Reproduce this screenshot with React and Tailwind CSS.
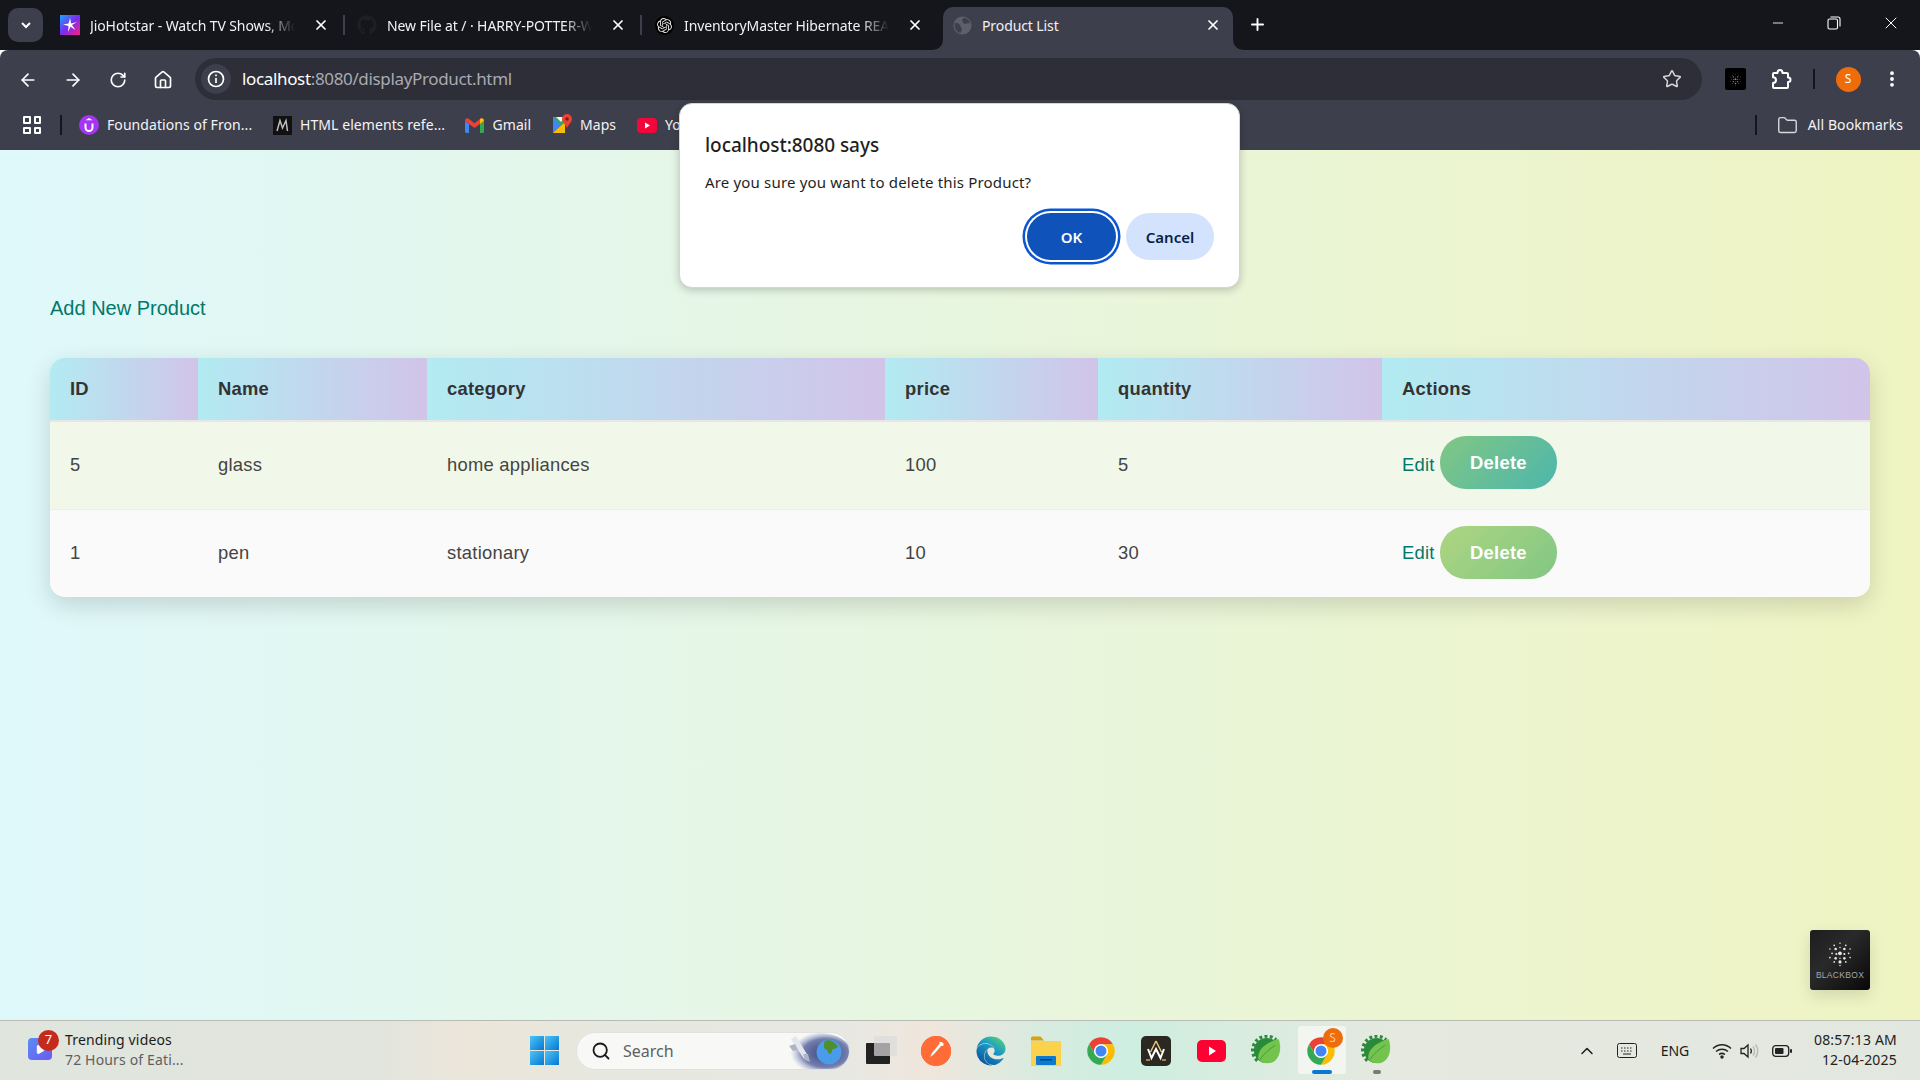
import React from "react";
import { ArrowLeft, ArrowRight, RotateCw, Home, Star, MoreVertical, X, Plus, Minus, Folder, ChevronUp, Search, Play } from "lucide-react";
import { FaGithub, FaEdge } from "react-icons/fa";
import { SiOpenai, SiPostman } from "react-icons/si";

const UI = "font-['Noto_Sans','Open_Sans',sans-serif]";

function ChromeLogo({ size = 30 }) {
  return (
    <svg width={size} height={size} viewBox="0 0 48 48">
      <path d="M4.95 13A22 22 0 0 1 43.05 13H24A11 11 0 0 0 14.47 29.5Z" fill="#ea4335" />
      <path d="M43.05 13A22 22 0 0 1 24 46L33.53 29.5A11 11 0 0 0 24 13Z" fill="#fbbc04" />
      <path d="M24 46A22 22 0 0 1 4.95 13L14.47 29.5A11 11 0 0 0 33.53 29.5Z" fill="#34a853" />
      <circle cx="24" cy="24" r="11" fill="#fff" />
      <circle cx="24" cy="24" r="8.8" fill="#4285f4" />
    </svg>
  );
}

function SpringLogo() {
  return (
    <svg width="31" height="31" viewBox="0 0 32 32">
      <circle cx="16" cy="16" r="13" fill="#2a8a3c" />
      <path d="M6.500 26.500A14.500 14.500 0 0 1 26 5" fill="none" stroke="#2a8a3c" strokeWidth="3.400" strokeDasharray="3 2.400" />
      <path d="M28.500 4C31.500 12 30.500 22 24 27C18 31 10.500 29.500 7.500 24.500C6.500 15 15 8 28.500 4Z" fill="#74c34d" />
      <path d="M9 25.500C14 18.500 19 14.500 25 10.500" fill="none" stroke="#3f9c42" strokeWidth="1" />
    </svg>
  );
}

function PuzzleIcon() {
  return (
    <svg width="24" height="24" viewBox="0 0 24 24" fill="none" stroke="#fff" strokeWidth="2" strokeLinejoin="round">
      <path d="M5 6h3.500c0-1.200 0-3 2.500-3s2.500 1.800 2.500 3H18a1 1 0 0 1 1 1v3.500c1.500 0 2.500 1 2.500 2.200s-1 2.300-2.500 2.300V20a1 1 0 0 1-1 1H5a1 1 0 0 1-1-1v-4c2 0 3-1.500 3-3s-1-2.800-3-2.800V7a1 1 0 0 1 1-1z" />
    </svg>
  );
}

function Dots({ size = 36, c = "#e8e8e8" }) {
  const pts = [[18, 3, 1], [10, 6, 1.2], [26, 6, 1.2], [4, 11, 1.1], [12, 11, 1.8], [18, 9, 1], [24, 11, 1.8], [32, 11, 1.1], [7, 17, 1.2], [13, 18, 1.5], [18, 17, 2.6], [24, 18, 1.5], [30, 17, 1.2], [4, 23, 1.2], [12, 24, 1.8], [18, 24, 1], [24, 24, 1.8], [32, 23, 1.1], [10, 29, 1.2], [18, 29, 2.2], [26, 29, 1.2], [18, 34, 1]];
  return (
    <svg width={size} height={size} viewBox="0 0 36 36">
      {pts.map(([x, y, r], i) => (
        <circle key={i} cx={x} cy={y} r={r} fill={c} />
      ))}
    </svg>
  );
}

function Tab({ icon, label, last }) {
  return (
    <div className="flex h-[50px] w-[297px] shrink-0 items-center pl-[12px]">
      <div className="flex w-[20px] justify-center">{icon}</div>
      <div className="ml-[10px] w-[205px] overflow-hidden whitespace-nowrap text-[14px] tracking-[-0.1px] text-[#f1f1f4] [mask-image:linear-gradient(90deg,#000_86%,transparent)]">{label}</div>
      <X size={16} strokeWidth={2.6} className="ml-[18px] text-white" />
      <div className={last ? "" : "ml-[14px] h-[20px] w-[2px] bg-[#3e3f4c]"} />
    </div>
  );
}

function Bookmark({ icon, label, width, ml }) {
  return (
    <div className={`flex items-center gap-[8px] ${ml}`}>
      <div className="flex w-[20px] justify-center">{icon}</div>
      <div className={`${width} -mt-[2px] overflow-hidden whitespace-nowrap text-[14px] tracking-[0.07px] text-[#f3f3f6]`}>{label}</div>
    </div>
  );
}

function TaskIcon({ children }) {
  return <div className="relative flex h-[60px] w-[55px] shrink-0 items-center justify-center">{children}</div>;
}

const rows = [
  { id: 5, name: "glass", cat: "home appliances", price: 100, qty: 5, hover: true },
  { id: 1, name: "pen", cat: "stationary", price: 10, qty: 30, hover: false },
];
const headers = [
  ["ID", "w-[148px]"],
  ["Name", "w-[229px]"],
  ["category", "w-[458px]"],
  ["price", "w-[213px]"],
  ["quantity", "w-[284px]"],
  ["Actions", "w-[488px]"],
];

export default function App() {
  return (
    <div className={`flex h-screen w-full flex-col overflow-hidden ${UI}`}>
      <svg width="0" height="0" className="absolute">
        <defs>
          <linearGradient id="edgeg" x1="0.9" y1="0" x2="0.2" y2="1">
            <stop offset="0" stopColor="#5bd66f" />
            <stop offset="0.4" stopColor="#1d9fc4" />
            <stop offset="1" stopColor="#0a4f9e" />
          </linearGradient>
          <linearGradient id="wing" x1="0" y1="0" x2="1" y2="1">
            <stop offset="0" stopColor="#4cc6f5" />
            <stop offset="1" stopColor="#0776d3" />
          </linearGradient>
          <linearGradient id="uvg" x1="0" y1="0" x2="1" y2="1">
            <stop offset="0" stopColor="#17a6ff" />
            <stop offset="0.5" stopColor="#7a2cf0" />
            <stop offset="1" stopColor="#ff1f7c" />
          </linearGradient>
          <radialGradient id="skyg" cx="0.6" cy="0.5" r="0.55">
            <stop offset="0" stopColor="#1f2a66" stopOpacity="0.9" />
            <stop offset="0.65" stopColor="#3a4a8e" stopOpacity="0.7" />
            <stop offset="1" stopColor="#8f9ac8" stopOpacity="0" />
          </radialGradient>
        </defs>
      </svg>

      {/* tab strip */}
      <div className="flex h-[50px] shrink-0 bg-[#15161b]">
        <div className="ml-[8px] mt-[8px] flex h-[34px] w-[35px] items-center justify-center rounded-[10px] bg-[#3e3f4c]">
          <svg width="14" height="14" viewBox="0 0 14 14"><path d="M3 5l4 4 4-4" fill="none" stroke="#fff" strokeWidth="2" /></svg>
        </div>
        <div className="ml-[5px] flex">
          <Tab label="JioHotstar - Watch TV Shows, Movies" icon={
            <svg width="20" height="20" viewBox="0 0 20 20"><rect width="20" height="20" fill="url(#uvg)" /><path d="M10 3l1.200 5.500L17 7l-5 3 3.500 5-5-3.200L8 17l.5-6L3 9.500l5.500-1z" fill="#fff" /></svg>
          } />
          <Tab label="New File at / · HARRY-POTTER-WEBSITE" icon={<FaGithub size={20} className="text-[#1e1f24]" />} />
          <Tab label="InventoryMaster Hibernate REACT" icon={
            <div className="flex h-[19px] w-[19px] items-center justify-center rounded-full bg-black"><SiOpenai size={15} className="text-[#e6e6e6]" /></div>
          } last />
        </div>
        <div className="relative ml-[4px] mt-[7px] flex h-[43px] w-[290px] items-center rounded-t-[10px] bg-[#3e3f4c] pb-[7px] pl-[10px]">
          <svg width="10" height="10" viewBox="0 0 10 10" className="absolute bottom-0 left-[-10px]"><path d="M10 0v10H0a10 10 0 0 0 10-10z" fill="#3e3f4c" /></svg>
          <svg width="10" height="10" viewBox="0 0 10 10" className="absolute bottom-0 right-[-10px]"><path d="M0 0v10h10A10 10 0 0 1 0 0z" fill="#3e3f4c" /></svg>
          <svg width="19" height="19" viewBox="0 0 20 20"><circle cx="10" cy="10" r="9.500" fill="#5e5f68" /><path d="M2 7c3 0 4 1 5 2s1 3 2 4-1 4-1 5C4 17 1 13 2 7zM11 2c3 0 6 2 7 5-2 1-3 0-4 1s-3 0-4-2 0-3 1-4z" fill="#3e3f4c" /></svg>
          <div className="ml-[10px] w-[223px] whitespace-nowrap text-[14px] tracking-[-0.1px] text-[#f1f1f4]">Product List</div>
          <X size={16} strokeWidth={2.6} className="text-white" />
        </div>
        <Plus size={19} strokeWidth={2.4} className="ml-[15px] mt-[15px] text-white" />
        <div className="ml-auto flex">
          <div className="flex h-[46px] w-[56px] items-center justify-center"><Minus size={16} strokeWidth={1.3} className="text-white" /></div>
          <div className="flex h-[46px] w-[56px] items-center justify-center">
            <svg width="14" height="14" viewBox="0 0 14 14" fill="none" stroke="#fff" strokeWidth="1.100"><rect x="1" y="3" width="9.500" height="10" rx="1.500" /><path d="M3.500 1h7.500a2 2 0 0 1 2 2v7.500" /></svg>
          </div>
          <div className="flex h-[46px] w-[58px] items-center justify-center"><X size={20} strokeWidth={1.2} className="text-white" /></div>
        </div>
      </div>

      {/* toolbar */}
      <div className="flex h-[50px] shrink-0 items-end rounded-t-[8px] bg-[#3e3f4c] pl-[5px]">
        <div className="flex h-[50px] items-center pt-[10px] text-white">
          <div className="flex w-[45px] justify-center"><ArrowLeft size={20} strokeWidth={2} /></div>
          <div className="flex w-[45px] justify-center"><ArrowRight size={20} strokeWidth={2} /></div>
          <div className="flex w-[45px] justify-center"><RotateCw size={18} strokeWidth={2.2} /></div>
          <div className="flex w-[45px] justify-center"><Home size={20} strokeWidth={2} /></div>
        </div>
        <div className="ml-[10px] flex h-[42px] w-[1507px] items-center rounded-full bg-[#2e2e38] pl-[6px] pr-[20px]">
          <div className="flex h-[30px] w-[30px] items-center justify-center rounded-full bg-[#3e3f4c]">
            <svg width="18" height="18" viewBox="0 0 18 18" fill="none" stroke="#fff" strokeWidth="1.700"><circle cx="9" cy="9" r="7.500" /><path d="M9 8v5" /><path d="M9 4.500v1.800" /></svg>
          </div>
          <div className="ml-[11px] whitespace-nowrap text-[17px] tracking-[-0.35px] text-white">localhost<span className="text-[#a9aab2]">:8080/displayProduct.html</span></div>
          <Star size={20} strokeWidth={1.800} className="ml-auto text-[#d5d5da]" />
        </div>
        <div className="flex h-[50px] items-center pt-[8px] text-white">
          <div className="ml-[10px] flex w-[46px] justify-center">
            <div className="flex h-[22px] w-[21px] items-center justify-center rounded-[2px] bg-black"><Dots size={13} c="#8c8c8c" /></div>
          </div>
          <div className="flex w-[46px] justify-center"><PuzzleIcon /></div>
          <div className="flex w-[20px] justify-center"><div className="h-[20px] w-[2px] bg-[#15161b]" /></div>
          <div className="flex w-[48px] justify-center">
            <div className="flex h-[25px] w-[25px] items-center justify-center rounded-full bg-[#ee6c0a] text-[12px] text-white">S</div>
          </div>
          <div className="flex w-[40px] justify-center"><MoreVertical size={20} strokeWidth={2.600} /></div>
        </div>
      </div>

      {/* bookmarks */}
      <div className="flex h-[50px] shrink-0 items-center bg-[#3e3f4c]">
        <div className="ml-[23px] grid h-[18px] w-[18px] grid-cols-2 gap-[3px]">
          <div className="rounded-[1px] border-2 border-white" /><div className="rounded-[1px] border-2 border-white" />
          <div className="rounded-[1px] border-2 border-white" /><div className="rounded-[1px] border-2 border-white" />
        </div>
        <div className="ml-[19px] h-[20px] w-[2px] bg-[#15161b]" />
        <Bookmark ml="ml-[17px]" width="w-[146px]" label="Foundations of Fron..." icon={
          <svg width="20" height="20" viewBox="0 0 20 20"><circle cx="10" cy="10" r="10" fill="#a435f0" /><path d="M6.500 8.500v4a3.500 3.500 0 0 0 7 0v-4" fill="none" stroke="#fff" strokeWidth="2" /><path d="M10 3l3.500 2.200H6.500z" fill="#fff" /></svg>
        } />
        <Bookmark ml="ml-[19px]" width="w-[145px]" label="HTML elements refe..." icon={
          <svg width="19" height="19" viewBox="0 0 19 19"><rect width="19" height="19" fill="#111" /><path d="M4 15L7 4.500 9.500 12 13 4.500 14.500 15" fill="none" stroke="#bdbdbd" strokeWidth="1.500" /></svg>
        } />
        <Bookmark ml="ml-[19.5px]" width="w-[40px]" label="Gmail" icon={
          <svg width="19" height="15" viewBox="0 0 19 15"><path d="M0 3v10.500a1.500 1.500 0 0 0 1.500 1.500H4V6z" fill="#4285f4" /><path d="M15 6v9h2.500a1.500 1.500 0 0 0 1.500-1.500V3z" fill="#34a853" /><path d="M0 3c0-2.500 2.500-3.500 4-2l5.500 4.200L15 1c1.500-1.500 4-.5 4 2l-4 3-5.500 4L4 6z" fill="#ea4335" /><path d="M15 1c1.500-1.500 4-.5 4 2l-4 3z" fill="#fbbc04" /></svg>
        } />
        <Bookmark ml="ml-[19.5px]" width="w-[38px]" label="Maps" icon={
          <svg width="19" height="22" viewBox="0 0 19 22"><path d="M0 3h12v16H0z" fill="#34a853" /><path d="M0 19l12-11v11z" fill="#fbbc04" /><path d="M0 3l8 8-8 8z" fill="#4285f4" /><path d="M12 3L3 3l5 5z" fill="#f1f3f4" /><path d="M14 0a5 5 0 0 1 5 5c0 3-3 5-5 9-2-4-5-6-5-9a5 5 0 0 1 5-5z" fill="#ea4335" /><circle cx="14" cy="5" r="1.800" fill="#7d1f17" /></svg>
        } />
        <Bookmark ml="ml-[19px]" width="w-[40px]" label="YouTube" icon={
          <svg width="20" height="15" viewBox="0 0 20 15"><rect width="20" height="15" rx="4" fill="#f2073b" /><path d="M8 4.500l5 3-5 3z" fill="#fff" /></svg>
        } />
        <div className="ml-auto flex items-center">
          <div className="h-[20px] w-[2px] bg-[#15161b]" />
          <Folder size={21} strokeWidth={1.600} className="ml-[20px] text-[#d8d8dc]" />
          <div className="-mt-[2px] ml-[10px] mr-[17px] whitespace-nowrap text-[14px] tracking-[0.07px] text-[#f3f3f6]">All Bookmarks</div>
        </div>
      </div>

      {/* page */}
      <div className="relative min-h-0 flex-1 bg-[linear-gradient(90deg,#dff8fb,#f0f4c3)] px-[50px] pt-[147px] font-['Liberation_Sans',Arial,sans-serif] leading-[normal]">
        <a className="block text-[20px] text-[#00796b]">Add New Product</a>
        <div className="mt-[38px] overflow-hidden rounded-[15px] shadow-[0_8px_24px_rgba(0,0,0,0.15)]">
          <table className="w-[1820px] table-fixed border-collapse text-left text-[18.4px] tracking-[0.25px]">
            <thead>
              <tr className="border-b-2 border-[#e6e6e6]">
                {headers.map(([h, w]) => (
                  <th key={h} className={`${w} h-[63px] bg-[linear-gradient(90deg,#b2ebf2,#d1c4e9)] px-[20px] font-bold text-[#333]`}>{h}</th>
                ))}
              </tr>
            </thead>
            <tbody>
              {rows.map((r) => (
                <tr key={r.id} className={r.hover ? "border-b border-[#eeeeee] bg-[#f1f8e9] text-[#444]" : "bg-[#fafafa] text-[#444]"}>
                  <td className="px-[20px] pb-[2px]">{r.id}</td>
                  <td className="px-[20px] pb-[2px]">{r.name}</td>
                  <td className="px-[20px] pb-[2px]">{r.cat}</td>
                  <td className="px-[20px] pb-[2px]">{r.price}</td>
                  <td className="px-[20px] pb-[2px]">{r.qty}</td>
                  <td className="px-[20px] pb-[18px] pt-[16px]">
                    <a className="text-[#00796b]">Edit</a>{" "}
                    <button className={r.hover
                      ? "inline-block -translate-y-[2px] rounded-[26px] bg-[linear-gradient(135deg,#81c784,#4db6ac)] px-[30px] py-[15.5px] font-bold text-white"
                      : "inline-block rounded-[26px] bg-[linear-gradient(135deg,#aed581,#81c784)] px-[30px] py-[15.5px] font-bold text-white"}>Delete</button>
                  </td>
                </tr>
              ))}
            </tbody>
          </table>
        </div>

        {/* floating extension */}
        <div className="absolute bottom-[30px] right-[50px] flex h-[60px] w-[60px] flex-col items-center justify-center rounded-[3px] bg-[linear-gradient(135deg,#1d1d1d,#2a2a2a_40%,#080808)] shadow-[0_6px_16px_rgba(0,0,0,0.12)]">
          <Dots size={26} />
          <div className="mt-[3px] text-[8.5px] leading-[10px] tracking-[0.3px] text-[#a8a8a8]">BLACKBOX</div>
        </div>

        {/* confirm dialog */}
        <div className={`absolute left-[679px] top-[-47px] h-[185px] w-[561px] rounded-[13px] border border-[#d5d5d5] bg-white shadow-[0_2px_8px_rgba(0,0,0,0.22)] ${UI} text-[#1f1f1f]`}>
          <div className="ml-[25px] mt-[28px] text-[19px] font-medium leading-[26px] tracking-[-0.05px]">localhost:8080 says</div>
          <div className="ml-[25px] mt-[14px] text-[15px] leading-[20px] tracking-[0.17px]">Are you sure you want to delete this Product?</div>
          <div className="mr-[25px] mt-[21px] flex justify-end gap-[10px]">
            <button className="h-[47px] w-[89px] rounded-full bg-[#0f52ba] text-[15px] font-semibold text-white shadow-[0_0_0_2px_#fff,0_0_0_4.5px_#0b57d0]">OK</button>
            <button className="h-[47px] w-[88px] rounded-full bg-[#d3e3fd] text-[15px] font-semibold text-[#0a1f44]">Cancel</button>
          </div>
        </div>
      </div>

      {/* taskbar */}
      <div className="flex h-[60px] shrink-0 items-center border-t border-[#b9bcb5] bg-[linear-gradient(90deg,#e0e5dd_0px,#e2e5dd_380px,#ece6da_470px,#e6e8e0_620px,#e8e8e2_850px,#f0e6dc_930px,#d8ebe0_1040px,#cdeee0_1130px,#d8ecdf_1230px,#e6e9df_1400px,#e2e7e0_1920px)]">
        <div className="relative flex w-[530px] shrink-0 items-center pl-[28px]">
          <div className="-mt-[3px] flex h-[22px] w-[24px] items-center justify-center rounded-[4px] bg-[linear-gradient(135deg,#5a8cf2,#6a5cf0)]">
            <Play size={11} fill="#fff" className="text-white" />
          </div>
          <div className="absolute left-[38px] top-[-2px] flex h-[21px] w-[21px] items-center justify-center rounded-full bg-[#c42b1c] text-[13px] text-white">7</div>
          <div className="-mt-[2px] ml-[13px] text-[14px] leading-[20px] tracking-[0.15px]">
            <div className="text-[#1b1b1b]">Trending videos</div>
            <div className="text-[#5f5f5f]">72 Hours of Eati...</div>
          </div>
        </div>
        <svg width="29" height="29" viewBox="0 0 29 29" className="shrink-0">
          <rect width="14" height="14" fill="url(#wing)" /><rect x="15" width="14" height="14" fill="url(#wing)" />
          <rect y="15" width="14" height="14" fill="url(#wing)" /><rect x="15" y="15" width="14" height="14" fill="url(#wing)" />
        </svg>
        <div className="relative ml-[17px] flex h-[38px] w-[274px] shrink-0 items-center overflow-hidden rounded-full border border-[#e1e1e1] bg-[#f8f9f6] pl-[14px]">
          <Search size={20} strokeWidth={2.200} className="text-[#1a1a1a]" />
          <div className="ml-[12px] text-[16px] text-[#5f5f5f]">Search</div>
          <svg width="66" height="38" viewBox="0 0 66 38" className="absolute right-0 top-0">
            <ellipse cx="36" cy="20" rx="32" ry="20" fill="url(#skyg)" />
            <circle cx="46" cy="19" r="12.500" fill="#4a9bea" />
            <path d="M42 8c4-2 10 0 13 6-3 1-4 3-6 2 1 4-3 7-4 3-1-3-5-3-4-6 0-2 0-4 1-5z" fill="#4f8f2c" />
            <path d="M8 6l13 20 4-3L13 3z" fill="#e4e6ee" />
            <path d="M6 13l6-2 3 6-5 1zM20 21l5 0 2 8-5-2z" fill="#aeb3c6" />
          </svg>
        </div>
        <div className="ml-[3.5px] flex shrink-0">
          <TaskIcon>
            <div className="absolute left-[12px] top-[22px] h-[21px] w-[24px] rounded-[1px] bg-[#222]" />
            <div className="absolute left-[20px] top-[15px] h-[20px] w-[23px] rounded-[1px] bg-[#dcdcdc]/70" />
          </TaskIcon>
          <TaskIcon>
            <div className="flex h-[30px] w-[30px] items-center justify-center rounded-full bg-[#ff6c37]"><SiPostman size={30} className="text-[#ff6c37]" /></div>
            <svg width="18" height="20" viewBox="0 0 18 20" className="absolute"><path d="M13 2l2 2-7 8-2 2-3 2 2-4zM12 1.500c1-1 3-.5 4 .5s1 3-1 3z" fill="#fff" /></svg>
          </TaskIcon>
          <TaskIcon><FaEdge size={30} className="fill-[url(#edgeg)]" /></TaskIcon>
          <TaskIcon>
            <svg width="30" height="30" viewBox="0 0 30 30"><path d="M0 2a1.500 1.500 0 0 1 1.500-1.500h8l3.500 4H0z" fill="#d9a20e" /><rect y="5" width="30" height="25" fill="#fbd24c" /><rect x="5" y="20" width="20" height="9" rx="1" fill="#0b7ad1" /><rect x="9" y="23" width="12" height="1.500" fill="#063f73" /></svg>
          </TaskIcon>
          <TaskIcon><ChromeLogo /></TaskIcon>
          <TaskIcon>
            <svg width="30" height="30" viewBox="0 0 30 30"><rect width="30" height="30" rx="5" fill="#2b2822" /><path d="M7 13l3.500 9L15 13l4.500 9L23 13" fill="none" stroke="#fff" strokeWidth="2" /><path d="M15 5l-5.500 11M15 5l5.500 11" stroke="#e7c27a" strokeWidth="1.500" /><path d="M5 24h4M21 24h4" stroke="#c9a45e" strokeWidth="1.500" /></svg>
          </TaskIcon>
          <TaskIcon>
            <svg width="29" height="22" viewBox="0 0 29 22"><rect width="29" height="22" rx="5" fill="#ff0033" /><path d="M12 6.500l7 4.500-7 4.500z" fill="#fff" /></svg>
          </TaskIcon>
          <TaskIcon><SpringLogo /></TaskIcon>
          <TaskIcon>
            <div className="absolute left-[4px] top-[5px] h-[48px] w-[48px] rounded-[3px] bg-[#f6f7f4]/80" />
            <div className="relative"><ChromeLogo /></div>
            <div className="absolute left-[29px] top-[7px] flex h-[20px] w-[20px] items-center justify-center rounded-full bg-[#ee6c0a] text-[12px] text-[#ffc9a0]">S</div>
            <div className="absolute left-[18px] top-[49px] h-[4px] w-[20px] rounded-full bg-[#0a78d6]" />
          </TaskIcon>
          <TaskIcon>
            <SpringLogo />
            <div className="absolute left-[24px] top-[49px] h-[4px] w-[8px] rounded-full bg-[#7a7a7a]" />
          </TaskIcon>
        </div>
        <div className="ml-auto flex items-center pr-[23px] text-[#1b1b1b]">
          <div className="flex w-[30px] justify-center"><ChevronUp size={20} strokeWidth={1.800} /></div>
          <div className="ml-[10px] flex w-[30px] justify-center">
            <svg width="20" height="15" viewBox="0 0 20 15" fill="none" stroke="#222" strokeWidth="1"><rect x="0.500" y="0.500" width="19" height="14" rx="2" /><path d="M4 5h1.500M7 5h1.500M10 5h1.500M13 5h1.500M4 8h1.500M7 8h1.500M10 8h1.500M13 8h1.500M6 11h8" /></svg>
          </div>
          <div className="ml-[8px] w-[50px] text-center text-[14px]">ENG</div>
          <div className="ml-[8px] flex w-[28px] justify-center">
            <svg width="20" height="16" viewBox="0 0 20 16" fill="none" stroke="#222" strokeWidth="1.500"><path d="M1 5.500c5-5 13-5 18 0M4 8.500c3.500-3 8.500-3 12 0M7 11.500c2-1.500 4-1.500 6 0" /><circle cx="10" cy="14" r="1" fill="#222" /></svg>
          </div>
          <div className="flex w-[28px] justify-center">
            <svg width="20" height="16" viewBox="0 0 20 16" fill="none" strokeWidth="1.300"><path d="M1 5.500h3l4-3.500v12l-4-3.500H1z" stroke="#222" /><path d="M10.500 5.500c1 1.500 1 3.500 0 5" stroke="#222" /><path d="M13 3.500c2 2.500 2 6.500 0 9M15.500 1.500c3 3.500 3 9.500 0 13" stroke="#b5b5b5" /></svg>
          </div>
          <div className="ml-[4px] flex w-[28px] justify-center">
            <svg width="20" height="14" viewBox="0 0 20 14"><rect x="0.700" y="1.700" width="16" height="10.600" rx="3" fill="none" stroke="#222" strokeWidth="1.300" /><rect x="3" y="4" width="8.500" height="6" rx="1" fill="#222" /><rect x="18" y="5" width="2" height="4" rx="1" fill="#222" /></svg>
          </div>
          <div className="-mt-[2px] w-[101px] text-right text-[14px] leading-[20px] tracking-[0.2px] text-[#222]">
            <div>08:57:13 AM</div>
            <div>12-04-2025</div>
          </div>
        </div>
      </div>
    </div>
  );
}
